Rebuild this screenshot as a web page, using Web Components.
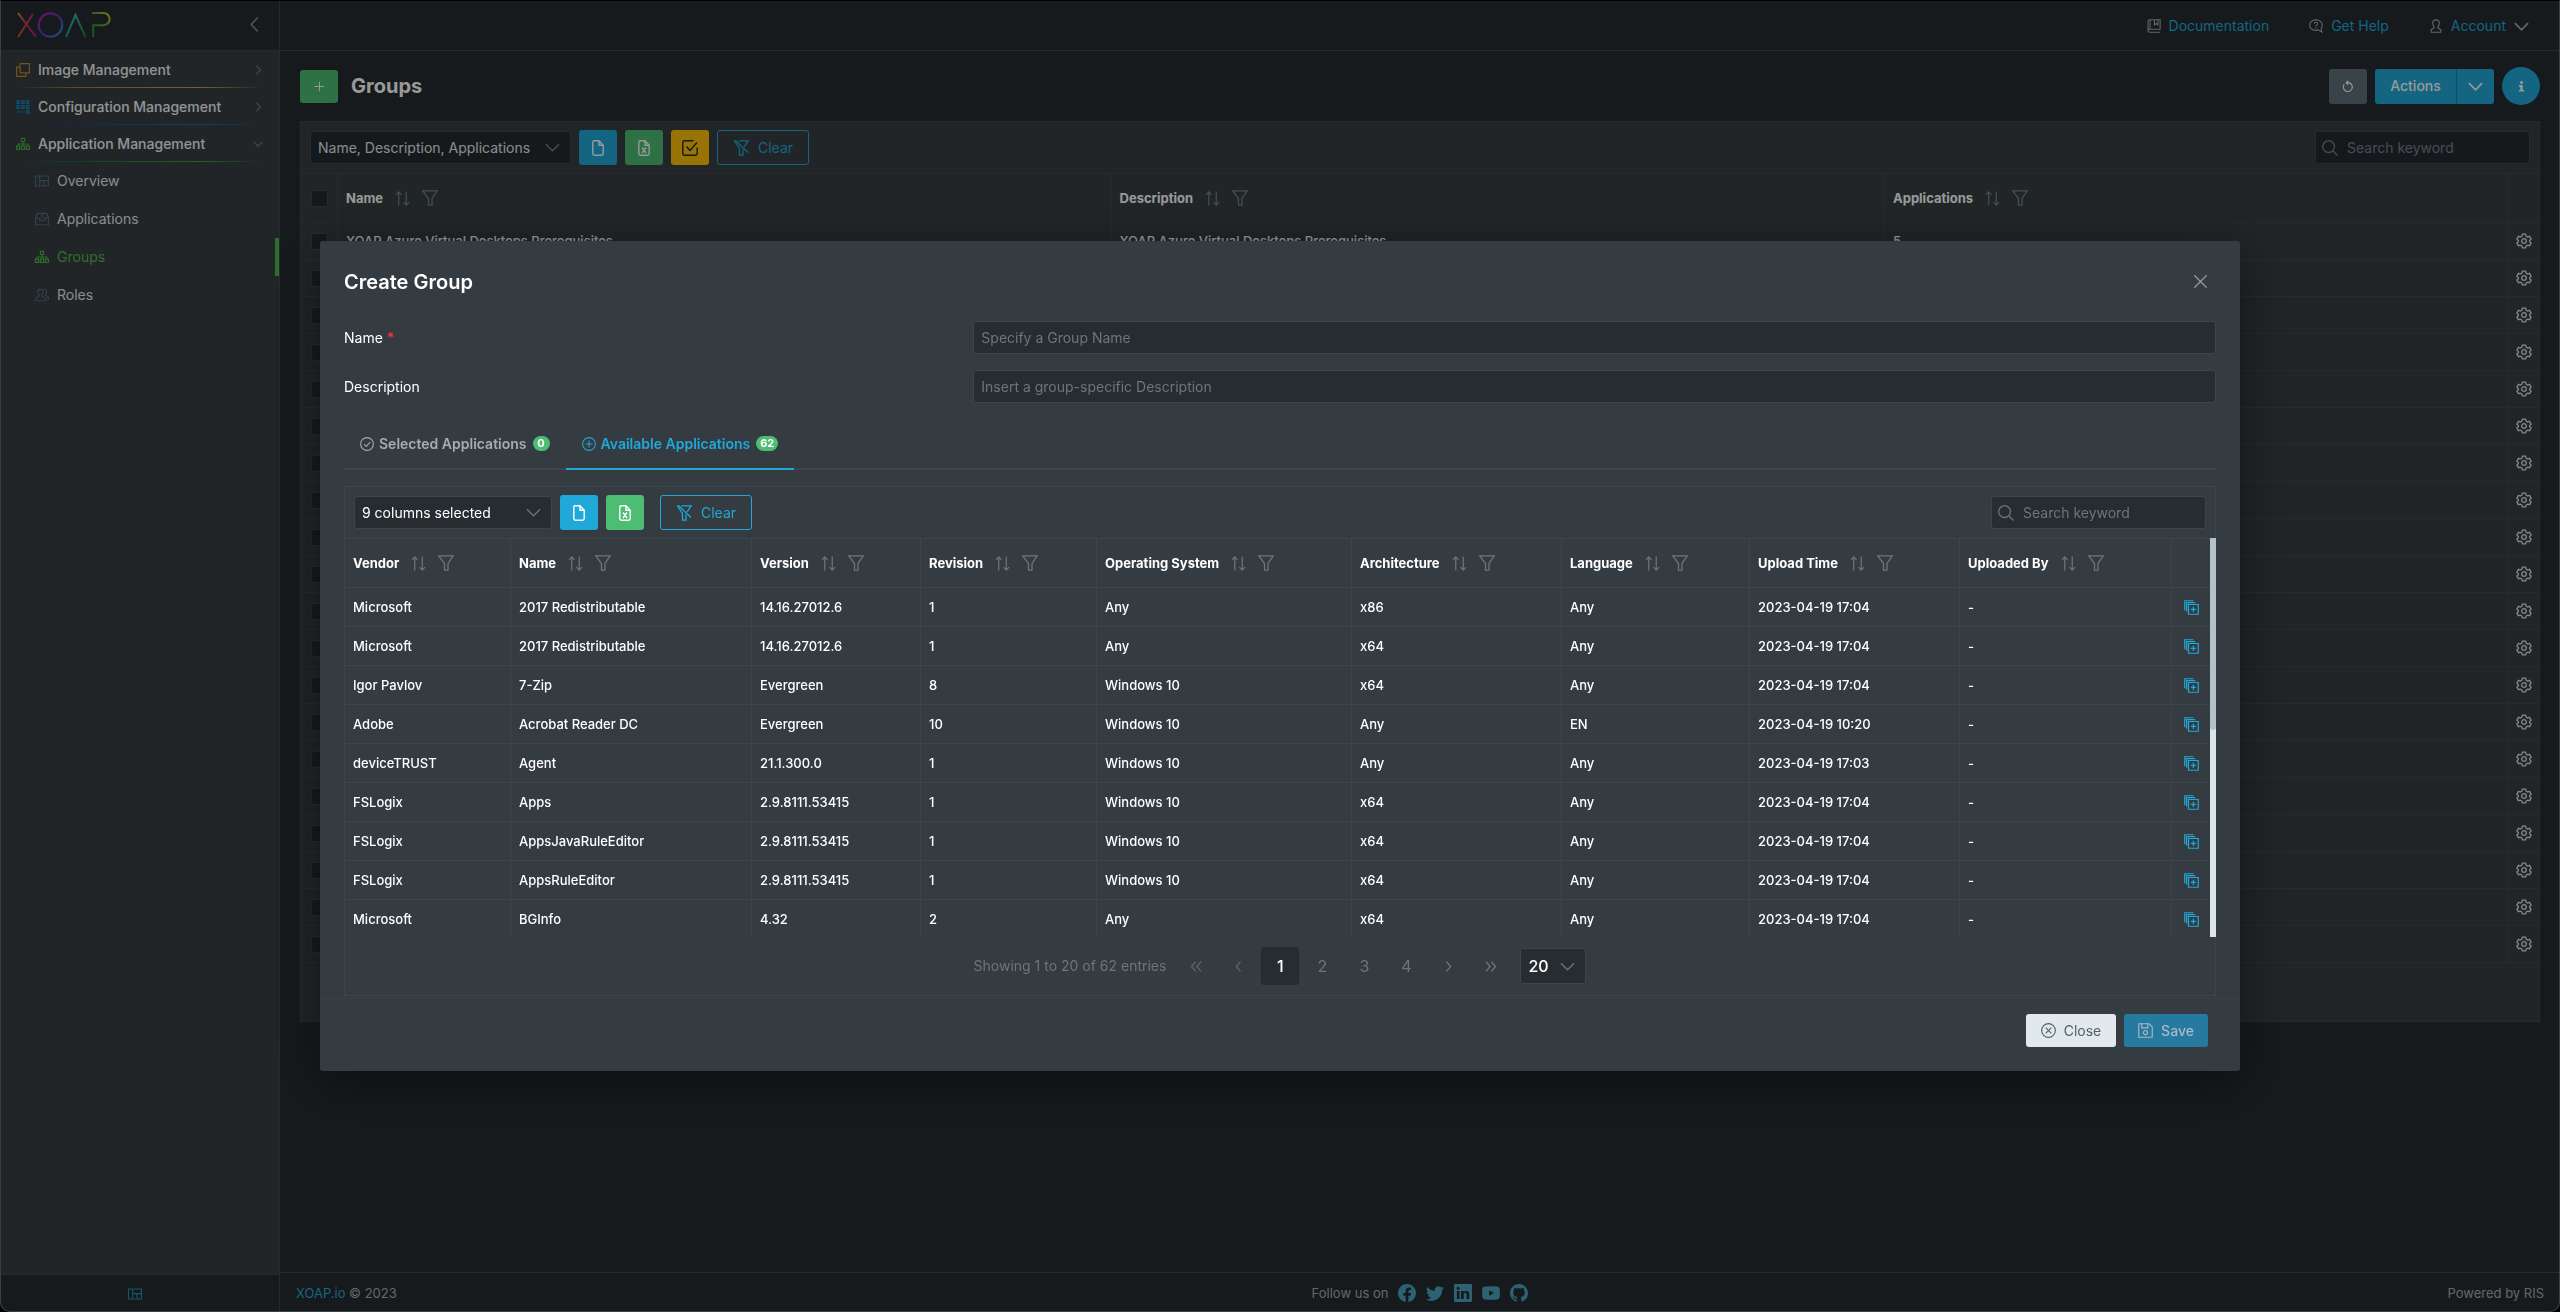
<!DOCTYPE html>
<html lang="en">
<head>
<meta charset="utf-8">
<title>XOAP – Groups</title>
<style>
  html, body { margin: 0; height: 100%; background: #000; }
  body {
    font-family: Inter, "Liberation Sans", sans-serif;
    font-size: 14px; line-height: 20px; color: #e4e7ea;
    --body: #262c30; --panel: #373e41; --line: #40474b; --field: #262b2f;
    --blue: #20a8d8; --green: #4dbd74; --amber: #ffc107; --muted: #73818f;
  }
</style>
</head>
<body>
<xo-app></xo-app>
<script>
const ICONS = {
  'chev-left': '<path d="M11.5 .5 4.5 8l7 7.5"/>',
  'chev-right': '<path d="M5 1l7 7-7 7"/>',
  'chev-down': '<path d="M1 4.5l7 7 7-7"/>',
  'dbl-left': '<path d="M7 2 2 8l5 6M13.5 2l-5 6 5 6"/>',
  'dbl-right': '<path d="M2.500 2l5 6-5 6M9 2l5 6-5 6"/>',
  'sgl-left': '<path d="M10.500 2l-5 6 5 6"/>',
  'sgl-right': '<path d="M5.500 2l5 6-5 6"/>',
  'layers': '<path d="M4.700 .7h10.600v10.600H4.700zM4.700 4.700H.7v10.600h10.600v-4"/>',
  'grid': '<path d="M1.200 1h2.600v3H1.200zM6.700 1h2.600v3H6.700zM12.200 1h2.600v3h-2.600zM1.200 6.500h2.600v3H1.200zM6.700 6.500h2.600v3H6.700zM12.200 6.500h2.600v3h-2.600zM12.200 12h2.600v3h-2.600zM1 13.500h1.500M3.500 13.500H5M6.500 13.500H8M9 13.500h1"/>',
  'sitemap': '<path d="M6.200 1.500h3.600v3.600H6.200zM.6 10.500h3.600v3.600H.6zM6.200 10.500h3.600v3.600H6.200zM11.800 10.500h3.600v3.600h-3.600zM8 5.100v5.400M2.400 10.500V8h11.200v2.500"/>',
  'layout': '<path d="M.6 2.300h14.800v11.400H.6zM5.400 2.300v11.400M5.400 7.500h10M10.300 7.500v6.200"/>',
  'inbox': '<path d="M2.800 1.600h10.400l2.200 5v8H.6v-8zM.6 7h4.900v3h5V7h4.900M8 1.600V7"/>',
  'people': '<path d="M6.300 1.600c2 0 3 1.400 3 3.200 0 1.300-.5 2.200-1.200 3v1.600l3.400 2.100c.5.400.7.900.7 1.500v1.600H.7V13c0-.6.200-1.100.7-1.500l3.200-2.100V7.800C3.800 7 3.300 6.100 3.300 4.800c0-1.800 1-3.200 3-3.200zM10 .9c2.200-.2 3.400 1.200 3.400 3.100 0 1.300-.5 2.200-1.200 3v1.500l2.500 1.600c.5.400.7.900.7 1.500v1.600h-1.600"/>',
  'book': '<path d="M3 .8h12v11H3.200C2 11.800 1.200 12.500 1.200 13.500s.8 1.700 2 1.700H15M1.200 13.500V2.500C1.200 1.500 2 .8 3 .8M3.500 .8v11M8.500 .8v6l2-1.800 2 1.800v-6"/>',
  'help': '<path d="M7.500 1C3.700 1 .8 3.600.8 7s2.900 6 6.700 6c1 0 2-.2 2.900-.6L14.800 15l-1-3.800C14.700 10 15.200 8.600 15.200 7c0-3.400-3.300-6-7.700-6zM5.800 5.400c.2-1 1-1.600 2.100-1.600s2 .7 2 1.700c0 1.300-2 1.400-2 3M7.900 9.500v1.300"/>',
  'user': '<path d="M8 1c2.400 0 3.800 1.600 3.800 4 0 1.600-.7 2.900-1.600 3.700v1.600l2.600 1.500c.5.300.8.800.8 1.400v1.900H2.400v-1.900c0-.6.300-1.100.8-1.400l2.600-1.500V8.700C4.900 7.900 4.200 6.600 4.200 5c0-2.400 1.400-4 3.800-4z"/>',
  'reload': '<path d="M3 5.700a6 6 0 1 0 6-2.200H5.500M8.300 .7 5.500 3.500l2.800 2.800"/>',
  'info': '<g fill="currentColor" stroke="none"><circle cx="8" cy="3" r="1.900"/><path d="M4.800 6.300h4.700v6h1.700v2H4.800v-2h1.700v-4H4.800z"/></g>',
  'search': '<circle cx="6.600" cy="6.600" r="5.900"/><path d="M11 11l4.500 4.500"/>',
  'file': '<path d="M4 .8h5l4.200 4.400v8.300a1.700 1.700 0 0 1-1.700 1.700h-7a1.700 1.700 0 0 1-1.700-1.700V2.500C2.800 1.500 3.300 .8 4 .8zM9 .8v4.400h4.200"/>',
  'excel': '<path d="M4 .8h5l4.200 4.400v8.300a1.700 1.700 0 0 1-1.700 1.700h-7a1.700 1.700 0 0 1-1.700-1.700V2.500C2.800 1.500 3.300 .8 4 .8zM9 .8v4.400h4.200M6 7.500l4 5.500M10 7.500 6 13"/>',
  'task': '<path d="M15.200 7.500v6a1.700 1.700 0 0 1-1.700 1.700h-11a1.700 1.700 0 0 1-1.700-1.700v-11A1.700 1.700 0 0 1 2.500.8h9M4.500 6.500l3.500 4 7-8"/>',
  'filter': '<path d="M.8 .8h14.400L10 8.500v6.700H6.500V8.500z"/>',
  'filter-x': '<path d="M5.500 .8h9.700L11 7M10 9.500v5.700H6.500V8.500L1.500 1M1 .8h2.500M3 1l12 11.500"/>',
  'sort': '<path d="M4 15.500V1M1 4.200 4 1l3 3.200M12 .5V15M9 11.800l3 3.200 3-3.200"/>',
  'gear': '<path d="M6.400 1.200h3.200l.5 1.900 1.500.9 1.900-.6 1.600 2.800-1.400 1.300v1.200l1.400 1.300-1.600 2.700-1.900-.5-1.500.9-.5 1.800H6.400l-.5-1.800-1.500-.9-1.900.5-1.600-2.700 1.400-1.300V7.500L.9 6.200l1.600-2.800 1.900.6 1.500-.9z"/><circle cx="8" cy="8" r="2.300"/>',
  'ok-circle': '<circle cx="8" cy="8" r="7.300"/><path d="M4.500 8l2.700 2.700 4.500-5"/>',
  'plus-circle': '<circle cx="8" cy="8" r="7.300"/><path d="M8 4v8M4 8h8"/>',
  'x-circle': '<circle cx="8" cy="8" r="7.300"/><path d="M5 5l6 6M11 5l-6 6"/>',
  'library': '<path d="M10 .8H.8v10M12 2.800H2.800v9.500M4.800 4.800h10.400v10.400H4.800zM10 7.300v5.400M7.300 10h5.400"/>',
  'save': '<path d="M.8 .8h11l3.400 3.400v11H.8zM4 .8v4.400h6.500V.8"/><circle cx="8" cy="10.200" r="2.200"/>',
  'close': '<path d="M1.500 1.500l13 13M14.500 1.500l-13 13"/>',
  'plus': '<path d="M8 1v14M1 8h14"/>',
  'facebook': '<path fill="currentColor" stroke="none" d="M16 8.049c0-4.446-3.582-8.050-8-8.050C3.580 0-.002 3.603-.002 8.050c0 4.017 2.926 7.347 6.750 7.951v-5.625h-2.030V8.050H6.750V6.275c0-2.017 1.195-3.131 3.022-3.131.876 0 1.791.157 1.791.157v1.980h-1.009c-.993 0-1.303.621-1.303 1.258v1.510h2.218l-.354 2.326H9.250V16c3.824-.604 6.750-3.934 6.750-7.951"/>',
  'twitter': '<path fill="currentColor" stroke="none" d="M5.026 15c6.038 0 9.341-5.003 9.341-9.334q.002-.211-.006-.422A6.700 6.700 0 0 0 16 3.542a6.700 6.700 0 0 1-1.889.518 3.300 3.300 0 0 0 1.447-1.817 6.500 6.500 0 0 1-2.087.793A3.286 3.286 0 0 0 7.875 6.030a9.320 9.320 0 0 1-6.767-3.429 3.290 3.290 0 0 0 1.018 4.382A3.300 3.300 0 0 1 .64 6.575v.045a3.290 3.290 0 0 0 2.632 3.218 3.200 3.200 0 0 1-.865.115 3 3 0 0 1-.614-.057 3.280 3.280 0 0 0 3.067 2.277A6.600 6.600 0 0 1 .78 13.580a6 6 0 0 1-.78-.045A9.340 9.340 0 0 0 5.026 15"/>',
  'linkedin': '<path fill="currentColor" stroke="none" d="M0 1.146C0 .513.526 0 1.175 0h13.650C15.474 0 16 .513 16 1.146v13.708c0 .633-.526 1.146-1.175 1.146H1.175C.526 16 0 15.487 0 14.854zm4.943 12.248V6.169H2.542v7.225zm-1.200-8.212c.837 0 1.358-.554 1.358-1.248-.015-.709-.52-1.248-1.342-1.248S2.400 3.226 2.400 3.934c0 .694.521 1.248 1.327 1.248zm4.908 8.212V9.359c0-.216.016-.432.08-.586.173-.431.568-.878 1.232-.878.869 0 1.216.662 1.216 1.634v3.865h2.401V9.250c0-2.220-1.184-3.252-2.764-3.252-1.274 0-1.845.7-2.165 1.193V6.169h-2.400c.03.678 0 7.225 0 7.225z"/>',
  'youtube': '<path fill="currentColor" fill-rule="evenodd" stroke="none" d="M3 2.300Q8 1.900 13 2.300Q15.600 2.500 15.800 5Q16.100 8 15.800 11Q15.600 13.500 13 13.700Q8 14.100 3 13.700Q.4 13.500.2 11Q-.1 8 .2 5Q.4 2.500 3 2.300zM6.400 5.600v4.800L10.600 8z"/>',
  'github': '<path fill="currentColor" stroke="none" d="M8 0C3.580 0 0 3.580 0 8c0 3.540 2.290 6.530 5.470 7.590.4.070.55-.17.55-.38 0-.19-.01-.82-.01-1.490-2.010.37-2.530-.49-2.690-.94-.09-.23-.48-.94-.82-1.130-.28-.15-.68-.52-.01-.53.63-.01 1.080.58 1.230.82.72 1.210 1.870.87 2.330.66.07-.52.28-.87.51-1.070-1.780-.2-3.640-.89-3.640-3.950 0-.87.31-1.590.82-2.150-.08-.2-.36-1.020.08-2.120 0 0 .67-.21 2.200.82.64-.18 1.320-.27 2-.27s1.360.09 2 .27c1.530-1.040 2.200-.82 2.200-.82.44 1.100.16 1.920.08 2.120.51.56.82 1.270.82 2.150 0 3.070-1.870 3.750-3.650 3.950.29.25.54.73.54 1.480 0 1.070-.01 1.930-.01 2.200 0 .21.15.46.55.38A8.010 8.010 0 0 0 16 8c0-4.420-3.580-8-8-8"/>'
};

const RESET = `
  *, *::before { box-sizing: border-box; }
  button, input, select { font: inherit; color: inherit; margin: 0; }
  button { cursor: pointer; border: 0; background: none; padding: 0; }
  a { color: inherit; text-decoration: none; }
  select, input { appearance: none; border: 0; outline: 0; background: none; border-radius: 0; }
`;

function define(name, render) {
  customElements.define(name, class extends HTMLElement {
    constructor() { super(); this.attachShadow({ mode: 'open' }); }
    connectedCallback() {
      const t = document.createElement('template');
      t.innerHTML = render(this);
      this.shadowRoot.replaceChildren(t.content.cloneNode(true));
    }
  });
}

/* <xo-icon name size weight> */
define('xo-icon', el => {
  const s = el.getAttribute('size') || 16;
  return `<style>:host{display:inline-flex;flex:none}svg{display:block;overflow:visible}</style>
  <svg width="${s}" height="${s}" viewBox="0 0 16 16" fill="none" stroke="currentColor"
    stroke-width="${el.getAttribute('weight') || 1.3}" aria-hidden="true">${ICONS[el.getAttribute('name')]}</svg>`;
});

/* <xo-button kind icon> */
define('xo-button', el => `<style>${RESET}
  :host { display: inline-flex; flex: none; }
  button { display: flex; align-items: center; justify-content: center; gap: 8px; height: 35px;
    min-width: 38px; border-radius: 3px; background: var(--blue); color: #fff; font-weight: 500; }
  :host([kind=green]) button { background: var(--green); }
  :host([kind=amber]) button { background: var(--amber); color: #23282c; }
  :host([kind=slate]) button { background: #617079; }
  :host([kind=outline]) button { background: none; border: 1px solid var(--blue); color: var(--blue); width: 92px; font-weight: 400; gap: 9px; }
  :host([kind=round]) button { border-radius: 50%; height: 38px; }
  :host([kind=light]) button { background: #e1e9ed; color: #536069; height: 33px; width: 90px; font-weight: 400; }
  :host([kind=save]) button { background: #277a9f; color: #a9bac4; height: 33px; width: 84px; }
  :host([kind=add]) button { background: var(--green); height: 33px; }
  </style><button type="button" aria-label="${el.getAttribute('label') || ''}"><xo-icon name="${el.getAttribute('icon')}"
    size="${el.getAttribute('size') || 16}" weight="${el.getAttribute('weight') || 1.4}"></xo-icon><slot></slot></button>`);

/* <xo-select value label> */
define('xo-select', el => `<style>${RESET}
  :host { display: grid; height: 35px; padding: 1px 0; flex: none; }
  select { grid-area: 1/1; width: 100%; background: var(--field); border: 1px solid var(--line); border-radius: 3px;
    padding: 0 36px 0 7px; font-weight: 400; }
  xo-icon { grid-area: 1/1; justify-self: end; align-self: center; margin-right: 11px; color: var(--muted); pointer-events: none; }
  :host([compact]) { height: 38px; }
  :host([compact]) select { font-size: 16px; font-weight: 500; }
  </style><select aria-label="${el.getAttribute('label')}"><option>${el.getAttribute('value')}</option></select>
  <xo-icon name="chev-down" size="15"></xo-icon>`);

define('xo-search', el => `<style>${RESET}
  :host { display: block; width: 215px; margin-left: auto; }
  label { display: flex; align-items: center; gap: 9px; height: 33px; padding: 0 6px; background: var(--field);
    border: 1px solid var(--line); border-radius: 3px; color: var(--muted); }
  input { flex: 1; min-width: 0; padding: 0; }
  input::placeholder { color: var(--muted); opacity: 1; }
  </style><label><xo-icon name="search"></xo-icon><input type="search" placeholder="Search keyword" aria-label="Search keyword"></label>`);

/* panel that holds a toolbar slot and a table slot */
define('xo-panel', () => `<style>${RESET}
  :host { display: block; border: 1px solid var(--line); background: var(--panel); }
  .bar { display: flex; align-items: center; gap: 8px; padding: 8px 9px; border-bottom: 1px solid var(--line); }
  </style><div class="bar"><slot name="tools"></slot></div><slot></slot>`);

define('xo-sidebar', () => {
  const groups = [
    ['layers', 'Image Management', '#bd8e2e', 'right', '#7d5a2900, #a98429 25%, #c9a92b 75%, #c9a92b00'],
    ['grid', 'Configuration Management', '#1190c8', 'right', '#25306a00, #2a3b8a 25%, #087bb0 75%, #087bb000'],
    ['sitemap', 'Application Management', '#45b04a', 'down', '#1f5f3000, #1d6b38 25%, #45a03c 75%, #45a03c00']
  ];
  const items = [['layout', 'Overview'], ['inbox', 'Applications'], ['sitemap', 'Groups'], ['people', 'Roles']];
  return `<style>${RESET}
  :host { display: flex; flex-direction: column; background: var(--panel); border-right: 1px solid var(--line); }
  header { height: 51px; display: flex; justify-content: space-between; align-items: center; padding: 0 17px;
    background: var(--body); border-bottom: 1px solid var(--line); }
  header button { color: #7d8c98; display: flex; padding-bottom: 2px; }
  nav { flex: 1; }
  .group { display: flex; align-items: center; gap: 8px; height: 37px; padding: 0 16px; font-weight: 500; color: #f4f6f8; position: relative; }
  .group xo-icon:last-child { margin-left: auto; color: #64818f; }
  .group::before { content: ""; position: absolute; left: 16px; right: 16px; bottom: 0; height: 1px;
    background: linear-gradient(90deg, var(--fade)); }
  ul { list-style: none; margin: 0; padding: 0; }
  li a { display: flex; align-items: center; gap: 8px; height: 38px; padding-left: 35px; border-right: 4px solid transparent; }
  li xo-icon { color: #4d6e7e; }
  li a[aria-current] { color: #4fb84c; border-color: #4fb84c; }
  li a[aria-current] xo-icon { color: #4ab84c; }
  footer { height: 38px; border-top: 1px solid var(--line); background: var(--body); display: flex; align-items: center;
    justify-content: center; color: #2090b8; padding-right: 9px; }
  </style>
  <header>
    <svg width="94" height="26" viewBox="0 0 94 26" fill="none" stroke-width="2" role="img" aria-label="XOAP">
      <defs>
        <linearGradient id="x1" x1="0" y1="0" x2="1" y2="1"><stop stop-color="#d08a32"/><stop offset=".5" stop-color="#c42b58"/><stop offset="1" stop-color="#b8209a"/></linearGradient>
        <linearGradient id="x2" x1="1" y1="0" x2="0" y2="1"><stop stop-color="#b03060"/><stop offset="1" stop-color="#c9562f"/></linearGradient>
        <linearGradient id="o" x1="0" y1="0" x2="1" y2="1"><stop stop-color="#c81cc0"/><stop offset=".5" stop-color="#5a38b8"/><stop offset="1" stop-color="#238fd0"/></linearGradient>
        <linearGradient id="a" x1="0" y1="1" x2="1" y2="1"><stop stop-color="#1f8fae"/><stop offset=".5" stop-color="#38b890"/><stop offset="1" stop-color="#177a3e"/></linearGradient>
        <linearGradient id="p" x1="0" y1="1" x2="1" y2="0"><stop stop-color="#1d8a42"/><stop offset=".6" stop-color="#5aa838"/><stop offset="1" stop-color="#c8c822"/></linearGradient>
      </defs>
      <path stroke="url(#x1)" d="M1 1l18 24"/><path stroke="url(#x2)" d="M16 2 1 25"/>
      <circle cx="33.500" cy="13" r="11.700" stroke="url(#o)" stroke-width="2.200"/>
      <path stroke="url(#a)" d="M49 25 58.500 3 68.500 25"/>
      <path stroke="url(#p)" d="M75 1h11.500a5.700 5.700 0 0 1 0 12.200H76.200V25"/>
    </svg>
    <button type="button" aria-label="Collapse"><xo-icon name="chev-left" size="15" weight="1.700"></xo-icon></button>
  </header>
  <nav>
    ${groups.map(([i, t, c, d, f]) => `<a class="group" href="#" style="--fade:${f}"><xo-icon name="${i}" size="14" style="color:${c}"></xo-icon><span>${t}</span><xo-icon name="chev-${d}" size="10" weight="1.800"></xo-icon></a>`).join('')}
    <ul>${items.map(([i, t]) => `<li><a href="#" ${t === 'Groups' ? 'aria-current="page"' : ''}><xo-icon name="${i}" size="14"></xo-icon>${t}</a></li>`).join('')}</ul>
  </nav>
  <footer><xo-icon name="layout" size="14"></xo-icon></footer>`;
});

define('xo-topbar', () => `<style>${RESET}
  :host { display: flex; justify-content: flex-end; align-items: center; gap: 40px; height: 51px; padding: 2px 31px 0 20px;
    border-bottom: 1px solid var(--line); color: var(--blue); flex: none; }
  a { display: flex; align-items: center; gap: 8px; }
  xo-icon { color: #a3adb5; }
  </style>
  <a href="#"><xo-icon name="book" size="14" weight="1.200"></xo-icon>Documentation</a>
  <a href="#"><xo-icon name="help" size="14" weight="1.200"></xo-icon>Get Help</a>
  <a href="#"><xo-icon name="user" size="14" weight="1.200"></xo-icon>Account<xo-icon name="chev-down" size="15" weight="1.800"></xo-icon></a>`);

const TABLE_CSS = `
  table { width: 100%; table-layout: fixed; border-spacing: 0; font-size: 13px; font-weight: 500; color: #fff; }
  th, td { border: solid var(--line); border-width: 0 1px 1px 0; padding: 0 8px; text-align: left; white-space: nowrap; }
  th { height: 49px; font-weight: 700; }
  th:last-child, td:last-child { border-right: 0; }
  th > div { display: flex; align-items: center; gap: 12px; color: #fff; }
  th xo-icon { color: var(--muted); }
`;
const head = t => `<th scope="col"><div>${t}<xo-icon name="sort" size="15"></xo-icon><xo-icon name="filter"></xo-icon></div></th>`;

define('xo-group-table', () => `<style>${RESET}${TABLE_CSS}
  :host { display: block; padding-bottom: 58px; }
  td { height: 37px; }
  td:first-child, th:first-child { padding-left: 10px; }
  td:last-child { padding: 0; }
  td:last-child button { display: flex; margin: 0 auto; color: #dfe3e6; }
  input { display: block; width: 17px; height: 17px; background: var(--field); border: 1px solid var(--line); border-radius: 3px; }
  </style>
  <table><colgroup><col style="width:37px"><col><col><col style="width:623px"><col style="width:31px"></colgroup>
  <thead><tr><th><input type="checkbox" aria-label="Select all"></th>${['Name', 'Description', 'Applications'].map(head).join('')}<th></th></tr></thead>
  <tbody>${Array.from({ length: 20 }, (_, i) => `<tr><td><input type="checkbox" aria-label="Select row"></td>${
    i ? '<td></td><td></td><td></td>' : '<td>XOAP Azure Virtual Desktops Prerequisites</td><td>XOAP Azure Virtual Desktops Prerequisites</td><td>5</td>'
  }<td><button type="button" aria-label="Settings"><xo-icon name="gear"></xo-icon></button></td></tr>`).join('')}</tbody></table>`);

define('xo-app-table', () => {
  const cols = [['Vendor', 166], ['Name', 0], ['Version', 169], ['Revision', 176], ['Operating System', 255], ['Architecture', 210],
    ['Language', 188], ['Upload Time', 210], ['Uploaded By', 212]];
  const rows = [
    ['Microsoft', '2017 Redistributable', '14.16.27012.6', '1', 'Any', 'x86', 'Any', '2023-04-19 17:04'],
    ['Microsoft', '2017 Redistributable', '14.16.27012.6', '1', 'Any', 'x64', 'Any', '2023-04-19 17:04'],
    ['Igor Pavlov', '7-Zip', 'Evergreen', '8', 'Windows 10', 'x64', 'Any', '2023-04-19 17:04'],
    ['Adobe', 'Acrobat Reader DC', 'Evergreen', '10', 'Windows 10', 'Any', 'EN', '2023-04-19 10:20'],
    ['deviceTRUST', 'Agent', '21.1.300.0', '1', 'Windows 10', 'Any', 'Any', '2023-04-19 17:03'],
    ['FSLogix', 'Apps', '2.9.8111.53415', '1', 'Windows 10', 'x64', 'Any', '2023-04-19 17:04'],
    ['FSLogix', 'AppsJavaRuleEditor', '2.9.8111.53415', '1', 'Windows 10', 'x64', 'Any', '2023-04-19 17:04'],
    ['FSLogix', 'AppsRuleEditor', '2.9.8111.53415', '1', 'Windows 10', 'x64', 'Any', '2023-04-19 17:04'],
    ['Microsoft', 'BGInfo', '4.32', '2', 'Any', 'x64', 'Any', '2023-04-19 17:04']
  ];
  return `<style>${RESET}${TABLE_CSS}
  :host { display: flex; }
  .view { flex: 1; height: 398px; overflow: hidden; }
  td { height: 39px; }
  td:last-child { padding: 0; }
  td:last-child button { display: flex; margin: 0 auto; color: var(--blue); }
  .track { width: 6px; margin: -1px -1px 0 0; background: #dce5e8; }
  .thumb { height: 48%; background: #b2c2cb; border-radius: 0 0 3px 3px; }
  </style>
  <div class="view"><table><colgroup>${cols.map(([, w]) => `<col${w ? ` style="width:${w}px"` : ''}>`).join('')}<col style="width:38px"></colgroup>
  <thead><tr>${cols.map(([t]) => head(t)).join('')}<th></th></tr></thead>
  <tbody>${rows.map(r => `<tr>${r.concat('-').map(c => `<td>${c}</td>`).join('')}<td><button type="button" aria-label="Add"><xo-icon name="library" size="15"></xo-icon></button></td></tr>`).join('')}</tbody></table></div>
  <div class="track"><div class="thumb"></div></div>`;
});

define('xo-pager', () => `<style>${RESET}
  :host { display: flex; align-items: center; justify-content: center; height: 58px; color: var(--muted); }
  nav { display: flex; gap: 4px; margin: 0 11px; }
  nav button { width: 38px; height: 38px; display: flex; align-items: center; justify-content: center; border-radius: 3px; font-size: 16px; }
  nav button[aria-current] { background: var(--field); color: #fff; font-weight: 500; }
  .off { opacity: .7; }
  xo-select { width: 66px; color: #fff; }
  </style>
  <span>Showing 1 to 20 of 62 entries</span>
  <nav><button class="off" aria-label="First"><xo-icon name="dbl-left" size="13" weight="1.800"></xo-icon></button>
  <button class="off" aria-label="Previous"><xo-icon name="sgl-left" size="13" weight="1.800"></xo-icon></button>
  <button aria-current="page">1</button><button>2</button><button>3</button><button>4</button>
  <button aria-label="Next"><xo-icon name="sgl-right" size="13" weight="1.800"></xo-icon></button>
  <button aria-label="Last"><xo-icon name="dbl-right" size="13" weight="1.800"></xo-icon></button></nav>
  <xo-select compact label="Rows per page" value="20"></xo-select>`);

define('xo-dialog', () => `<style>${RESET}
  :host { position: fixed; inset: 0; display: flex; align-items: center; justify-content: center; background: rgba(0,0,0,.4); 
    --panel: #343b41; --line: #3d454c; --field: #272c30; --muted: #6c757d; color: #fff; }
  section { width: 75%; background: var(--panel); border-radius: 3px; box-shadow: 0 10px 50px rgba(0,0,0,.45); }
  header { display: flex; justify-content: space-between; align-items: center; height: 58px; padding: 24px 32px 0 24px; }
  h2 { margin: 0; font-size: 20px; line-height: 28px; font-weight: 600; }
  header button { display: flex; color: #a0a8ae; padding-bottom: 2px; }
  .body { padding: 22px 24px 2px; display: flex; flex-direction: column; gap: 16px; }
  .field { display: grid; grid-template-columns: 1fr 2fr; gap: 8px; align-items: center; }
  .field i { color: #f0313f; font-style: normal; font-weight: 700; }
  .field input { height: 33px; background: var(--field); border: 1px solid var(--line); border-radius: 3px; padding: 0 7px; }
  .field input::placeholder { color: var(--muted); opacity: 1; }
  .tabs { display: flex; box-shadow: inset 0 -2px #3d454c; }
  .tabs button { display: flex; align-items: center; height: 51px; gap: 5px; padding: 0 16px; font-weight: 600; color: #a5adb4; border-bottom: 2px solid transparent; }
  .tabs button[aria-selected=true] { color: var(--blue); border-color: var(--blue); }
  .tabs span { margin-left: 1px; background: var(--green); color: #fff; border-radius: 8px; font-size: 11px; line-height: 15px; padding: 0 4px; min-width: 17px; text-align: center; font-weight: 700; }
  footer { border-top: 1px solid #3c4145; display: flex; justify-content: flex-end; gap: 8px; padding: 15px 32px 24px; }
  xo-button[kind=outline] { margin-left: 8px; }
  </style>
  <section role="dialog" aria-labelledby="t">
    <header><h2 id="t">Create Group</h2><button type="button" aria-label="Close dialog"><xo-icon name="close" size="15"></xo-icon></button></header>
    <div class="body">
      <div class="field"><label for="n">Name <i>*</i></label><input id="n" placeholder="Specify a Group Name"></div>
      <div class="field"><label for="d">Description</label><input id="d" placeholder="Insert a group-specific Description"></div>
      <div class="tabs" role="tablist">
        <button role="tab" aria-selected="false"><xo-icon name="ok-circle" size="14" weight="1.200"></xo-icon>Selected Applications<span>0</span></button>
        <button role="tab" aria-selected="true"><xo-icon name="plus-circle" size="14" weight="1.200"></xo-icon>Available Applications<span>62</span></button>
      </div>
      <xo-panel>
        <xo-select slot="tools" style="width:198px" label="Columns" value="9 columns selected"></xo-select>
        <xo-button slot="tools" icon="file" label="Export CSV"></xo-button>
        <xo-button slot="tools" kind="green" icon="excel" label="Export Excel"></xo-button>
        <xo-button slot="tools" kind="outline" icon="filter-x" weight="1.300" label="Clear">Clear</xo-button>
        <xo-search slot="tools"></xo-search>
        <xo-app-table></xo-app-table>
        <xo-pager></xo-pager>
      </xo-panel>
    </div>
    <footer><xo-button kind="light" icon="x-circle" weight="1.200" size="15" label="Close">Close</xo-button><xo-button kind="save" icon="save" weight="1.200" size="15" label="Save">Save</xo-button></footer>
  </section>`);

define('xo-footer', () => `<style>${RESET}
  :host { display: flex; align-items: center; height: 40px; padding: 0 16px; border-top: 1px solid var(--line); font-size: 13px; color: #a9adb0; flex: none; }
  div { flex: 1; }
  .mid { flex: none; display: flex; align-items: center; gap: 10px; }
  .mid a { color: #4ba3c0; display: flex; }
  .end { text-align: right; }
  .home { color: var(--blue); }
  </style>
  <div><a class="home" href="#">XOAP.io</a> © 2023</div>
  <div class="mid">Follow us on ${['facebook', 'twitter', 'linkedin', 'youtube', 'github'].map(n => `<a href="#" aria-label="${n}"><xo-icon name="${n}" size="18"></xo-icon></a>`).join('')}</div>
  <div class="end">Powered by RIS</div>`);

define('xo-app', () => `<style>${RESET}
  :host { display: grid; grid-template-columns: 280px 1fr; min-height: 100vh; background: var(--body); }
  .page { display: flex; flex-direction: column; min-width: 0; }
  main { flex: 1; padding: 16px 20px; display: flex; flex-direction: column; gap: 16px; }
  .title { display: flex; align-items: center; gap: 8px; height: 38px; color: #fff; }
  h1 { margin: 0 auto 0 5px; font-size: 20px; line-height: 28px; font-weight: 700; }
  .split { display: flex; }
  .split button { height: 35px; background: var(--blue); display: flex; align-items: center; justify-content: center; font-weight: 500; border-radius: 3px 0 0 3px; width: 81px; }
  .split button + button { width: 38px; border-left: 1px solid #1a86ad; border-radius: 0 3px 3px 0; }
  .frame { position: fixed; inset: 0; pointer-events: none; border: 1px solid #3d4042; border-top-color: #000; border-radius: 0 0 10px 10px; box-shadow: 0 0 0 12px #000; }
  </style>
  <xo-sidebar></xo-sidebar>
  <div class="page">
    <xo-topbar></xo-topbar>
    <main>
      <div class="title">
        <xo-button kind="add" icon="plus" size="11" label="Add group"></xo-button><h1>Groups</h1>
        <xo-button kind="slate" icon="reload" size="12" weight="1.500" label="Reload"></xo-button>
        <div class="split"><button type="button">Actions</button><button type="button" aria-label="More actions"><xo-icon name="chev-down" size="15" weight="1.800"></xo-icon></button></div>
        <xo-button kind="round" icon="info" size="13" label="Info"></xo-button>
      </div>
      <xo-panel>
        <xo-select slot="tools" style="width:261px" label="Columns" value="Name, Description, Applications"></xo-select>
        <xo-button slot="tools" icon="file" label="Export CSV"></xo-button>
        <xo-button slot="tools" kind="green" icon="excel" label="Export Excel"></xo-button>
        <xo-button slot="tools" kind="amber" icon="task" label="Bulk edit"></xo-button>
        <xo-button slot="tools" kind="outline" icon="filter-x" weight="1.300" label="Clear">Clear</xo-button>
        <xo-search slot="tools"></xo-search>
        <xo-group-table></xo-group-table>
      </xo-panel>
    </main>
    <xo-footer></xo-footer>
  </div>
  <xo-dialog></xo-dialog>
  <div class="frame"></div>`);
</script>
</body>
</html>
